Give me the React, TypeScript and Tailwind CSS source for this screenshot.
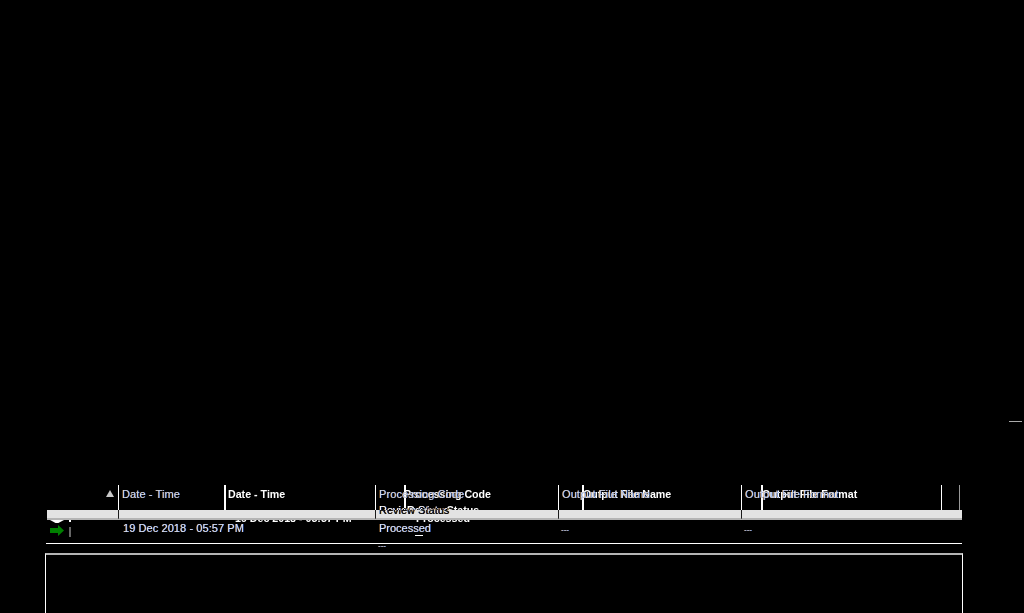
const thinCols = [
  { label: "Date - Time", width: "w-[257px]" },
  { label: "Processing Code", width: "w-[183px]" },
  { label: "Output File Name", width: "w-[183px]" },
  { label: "Output File Format", width: "w-[200px]" },
];

const boldCols = [
  { label: "Date - Time", width: "w-[180px]", inset: "pl-[2px]" },
  { label: "Processing Code", width: "w-[178px]", inset: "indent-[-2px]" },
  { label: "Output File Name", width: "w-[179px]", inset: "indent-[-1px]" },
  { label: "Output File Format", width: "w-[198px]", inset: "indent-[-1px]" },
];

const fringe = "[text-shadow:-0.5px_0_0_rgba(217,119,6,0.55),0.5px_0_0_rgba(37,99,235,0.8)]";

export default function App() {
  return (
    <div className="relative flex h-[613px] w-[1024px] flex-col overflow-hidden bg-black font-['Liberation_Sans',sans-serif] text-[11px] text-white">
      {/* stray dash top right */}
      <div className="flex justify-end pt-[421px] pr-[2px]">
        <div className="h-px w-[13px] bg-[#aaaaaa]" />
      </div>

      <div className="relative mt-[63px] ml-[46px] w-[916px]">
        {/* back layer: bold header */}
        <div className="flex h-[25px] pl-[178px]">
          {boldCols.map((col) => (
            <div key={col.label} className={`${col.width} ${col.inset} border-l-2 border-white pt-[3px] text-[10.67px] font-bold leading-[13px]`}>
              {col.label}
            </div>
          ))}
          <div className="w-px bg-[#999999]" />
        </div>

        {/* grey band */}
        <div className="relative z-10 ml-px h-[10px] border-b-2 border-[#b5b5b5] bg-[#e3e3e3]" />

        {/* bits of the back row that stick out under the band */}
        <div className="flex h-[3px] overflow-hidden text-[10.67px] font-bold">
          <div className="ml-[4px] h-[3px] w-[14px] shrink-0 bg-white [clip-path:polygon(0_0,100%_0,60%_100%,40%_100%)]" />
          <div className="ml-[5px] h-[2px] w-[2px] shrink-0 bg-white" />
          <div className="ml-[164px] -mt-[8px] w-[181px] shrink-0 leading-[13px]">19 Dec 2018 - 05:57 PM</div>
          <div className="-mt-[8px] leading-[13px]">Processed</div>
        </div>

        {/* front row */}
        <div className="flex h-[20px]">
          <div className="ml-[4px] mt-[2px] h-[11px] w-[14px] shrink-0">
            <svg viewBox="0 0 14 11" className="h-[11px] w-[14px]">
              <path d="M0 3h8V0l6 5.500-6 5.500V8H0z" fill="#008000" />
            </svg>
          </div>
          <div className="ml-[5px] mt-[4px] h-[10px] w-[2px] shrink-0 bg-[#666666]" />
          <div className={`ml-[52px] w-[256px] shrink-0 leading-[11px] tracking-[0.08px] text-[#d5e2fa] ${fringe}`}>19 Dec 2018 - 05:57 PM</div>
          <div className={`w-[182px] shrink-0 leading-[11px] text-[#d5e2fa] ${fringe}`}>Processed</div>
          <div className={`w-[183px] shrink-0 text-[8px] leading-[13px] text-[#d5e2fa] ${fringe}`}>---</div>
          <div className={`text-[8px] leading-[13px] text-[#d5e2fa] ${fringe}`}>---</div>
        </div>

        <div className="h-px bg-white" />

        {/* wrapped second line of the row */}
        <div className={`h-[9px] overflow-hidden pl-[332px] text-[8px] leading-[3px] text-[#d5e2fa] ${fringe}`}>---</div>

        {/* front layer: thin header labels */}
        <div className="absolute inset-x-0 top-0 z-20 flex h-[25px] pl-[73px]">
          {thinCols.map((col) => (
            <div key={col.label} className={`${col.width} pt-[3px] pl-[3px] leading-[13px] tracking-[0.1px] text-[#cfd8e8] ${fringe}`}>
              {col.label}
            </div>
          ))}
        </div>

        {/* front layer: column rules and second header line, inverted over the band */}
        <div className="absolute inset-x-0 top-0 z-20 flex h-[34px] mix-blend-difference">
          <div className="flex w-[72px] justify-end pt-[5px] pr-[4px]">
            <svg viewBox="0 0 8 7" className="h-[7px] w-[8px]">
              <path d="M4 0l4 7H0z" fill="#c8c8c8" />
            </svg>
          </div>
          {thinCols.map((col, i) => (
            <div key={col.label} className={`${col.width} border-l border-white pl-[3px] leading-[13px] ${fringe}`}>
              {i === 1 && <div className="pt-[19px]">Review Status</div>}
            </div>
          ))}
          <div className="h-[25px] border-l border-white" />
        </div>

        {/* back layer: second line of the header cell */}
        <div className="absolute top-[19px] left-[361px] text-[10.67px] font-bold leading-[13px]">Review Status</div>

        {/* stray underline in the row */}
        <div className="absolute top-[50px] left-[369px] h-px w-[8px] bg-white" />
      </div>

      {/* lower panel */}
      <div className="ml-[45px] w-[918px] flex-1 border-x border-t-2 border-x-white border-t-[#b4b4b4]" />
    </div>
  );
}
